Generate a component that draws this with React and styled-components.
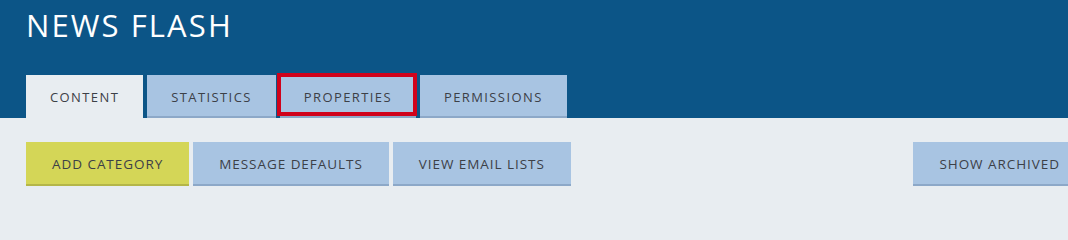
import React from 'react';
import styled, { createGlobalStyle } from 'styled-components';

const GlobalStyle = createGlobalStyle`
	body {
		margin: 0;
		background: #e8edf1;
		overflow: hidden;
		font-family: 'Open Sans', 'Liberation Sans', sans-serif;
	}
`;

const Header = styled.header`
	background: #0c5587;
	height: 118px;
	padding: 0 26px;
	box-sizing: border-box;
	display: flex;
	flex-direction: column;
	justify-content: space-between;
	min-width: 1115px;
`;

const Title = styled.h1`
	margin: 5px 0 0;
	font-size: 31px;
	line-height: 40px;
	font-weight: 400;
	letter-spacing: 2.1px;
	color: #ffffff;
`;

const TabList = styled.nav`
	display: flex;
	gap: 4px;
	align-items: flex-end;
`;

const Tab = styled.div`
	position: relative;
	height: 43px;
	box-sizing: border-box;
	padding: 2px 24px 0;
	display: flex;
	align-items: center;
	font-size: 13px;
	letter-spacing: 1.4px;
	color: #3c4047;
	background: ${(props) => (props.$active ? '#e8edf1' : '#a8c4e2')};
	border-bottom: 2px solid ${(props) => (props.$active ? '#e8edf1' : '#8ca8c8')};
`;

// red annotation frame drawn over a tab
const Highlight = styled.span`
	position: absolute;
	top: -2px;
	left: -3px;
	right: -1px;
	bottom: 0;
	border: 4px solid #d0021b;
	pointer-events: none;
`;

const Main = styled.main`
	padding: 24px 26px;
	min-width: 1115px;
`;

const Toolbar = styled.div`
	display: flex;
	gap: 4px;
	width: 1060px;
`;

const Button = styled.button`
	height: 44px;
	box-sizing: border-box;
	padding: 2px 26px 0;
	border: none;
	border-bottom: 2px solid ${(props) => (props.$primary ? '#b4b648' : '#8ca8c8')};
	background: ${(props) => (props.$primary ? '#d4d657' : '#a8c4e2')};
	font-family: inherit;
	font-size: 13.5px;
	letter-spacing: 0.95px;
	color: #3c4047;
	cursor: pointer;
	margin-left: ${(props) => (props.$push ? 'auto' : '0')};
`;

export default function App() {
	return (
		<>
			<GlobalStyle />
			<Header>
				<Title>NEWS FLASH</Title>
				<TabList>
					<Tab $active>CONTENT</Tab>
					<Tab>STATISTICS</Tab>
					<Tab>
						PROPERTIES
						<Highlight />
					</Tab>
					<Tab>PERMISSIONS</Tab>
				</TabList>
			</Header>
			<Main>
				<Toolbar>
					<Button $primary>ADD CATEGORY</Button>
					<Button>MESSAGE DEFAULTS</Button>
					<Button>VIEW EMAIL LISTS</Button>
					<Button $push>SHOW ARCHIVED</Button>
				</Toolbar>
			</Main>
		</>
	);
}
